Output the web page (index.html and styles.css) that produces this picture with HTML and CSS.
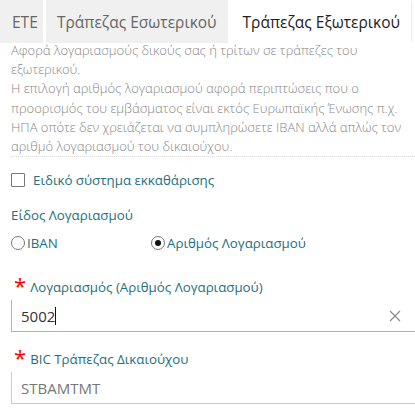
FILE: index.html
```html
<!DOCTYPE html>
<html lang="el">
<head>
    <meta charset="UTF-8">
    <meta name="viewport" content="width=device-width, initial-scale=1.0">
    <title>Εμβάσματα</title>
    <link rel="stylesheet" href="styles.css">
</head>
<body>
    <div class="tabs">
        <div class="tab tab-short">ΕΤΕ</div>
        <div class="tab">Τράπεζας Εσωτερικού</div>
        <div class="tab active">Τράπεζας Εξωτερικού</div>
    </div>

    <div class="panel">
        <p class="hint">
            Αφορά λογαριασμούς δικούς σας ή τρίτων σε τράπεζες του<br>
            εξωτερικού.<br>
            Η επιλογή αριθμός λογαριασμού αφορά περιπτώσεις που ο<br>
            προορισμός του εμβάσματος είναι εκτός Ευρωπαϊκής Ένωσης π.χ.<br>
            ΗΠΑ οπότε δεν χρειάζεται να συμπληρώσετε IBAN αλλά απλώς τον<br>
            αριθμό λογαριασμού του δικαιούχου.
        </p>

        <label class="check-row">
            <span class="checkbox"></span>
            <span class="label-text">Ειδικό σύστημα εκκαθάρισης</span>
        </label>

        <div class="field-title">Είδος Λογαριασμού</div>
        <div class="radio-row">
            <label class="radio radio-iban">
                <span class="radio-dot"></span>
                <span class="label-text">IBAN</span>
            </label>
            <label class="radio">
                <span class="radio-dot checked"></span>
                <span class="label-text">Αριθμός Λογαριασμού</span>
            </label>
        </div>

        <div class="field">
            <div class="field-label"><span class="req">*</span>Λογαριασμός (Αριθμός Λογαριασμού)</div>
            <div class="input focused">
                <span class="value">5002</span><span class="caret"></span>
                <svg class="clear" width="12" height="12" viewBox="0 0 12 12">
                    <path d="M1 1 L11 11 M11 1 L1 11" stroke="#888" stroke-width="1.1" fill="none"/>
                </svg>
            </div>
        </div>

        <div class="field">
            <div class="field-label"><span class="req">*</span>BIC Τράπεζας Δικαιούχου</div>
            <div class="input readonly">
                <span class="value">STBAMTMT</span>
            </div>
        </div>
    </div>
</body>
</html>
```

FILE: styles.css
```css
body {
    margin: 0;
    background-color: #fff;
    font-family: 'Open Sans', 'Noto Sans', sans-serif;
    color: #333;
}

.tabs {
    display: flex;
    height: 43px;
    gap: 3px;
}

.tab {
    display: flex;
    align-items: center;
    padding: 0 11px;
    background-color: #f0f0f0;
    color: #666;
    font-size: 15.5px;
}

.tab-short {
    width: 43px;
    padding: 0 0 0 12px;
    box-sizing: border-box;
}

.tab.active {
    background-color: #fff;
    color: #222;
    padding: 0 11px 0 12px;
    box-shadow: 2px 0 2px -1px #e8e8e8;
}

.panel {
    padding: 0 11px;
}

.hint {
    margin: -2px -11px 0 0;
    padding: 0;
    font-size: 13px;
    font-weight: 300;
    line-height: 19.2px;
    color: #888;
    border-bottom: 1px dotted #ddd;
    white-space: nowrap;
}

.check-row {
    display: flex;
    align-items: center;
    gap: 8px;
    margin-top: 14px;
}

.checkbox {
    width: 14px;
    height: 14px;
    box-sizing: border-box;
    border: 1.5px solid #777;
    border-radius: 1px;
}

.label-text {
    color: #24707e;
    font-size: 13.3px;
}

.field-title {
    margin-top: 17px;
    color: #24707e;
    font-size: 13.3px;
}

.radio-row {
    display: flex;
    margin-top: 10px;
}

.radio {
    display: flex;
    align-items: center;
    gap: 2px;
}

.radio-iban {
    width: 140px;
}

.radio-dot {
    position: relative;
    width: 14px;
    height: 14px;
    box-sizing: border-box;
    border: 1.2px solid #777;
    border-radius: 50%;
}

.radio-dot.checked::after {
    content: '';
    position: absolute;
    top: 3px;
    left: 3px;
    width: 6px;
    height: 6px;
    border-radius: 50%;
    background-color: #111;
}

.field {
    margin-top: 25px;
}

.field + .field {
    margin-top: 17px;
}

.field-label {
    display: flex;
    align-items: flex-end;
    color: #24707e;
    font-size: 13.3px;
    line-height: 20px;
}

.req {
    color: #f00;
    font-size: 22px;
    line-height: 16px;
    margin: 0 4px 0 3px;
    align-self: flex-start;
}

.input {
    display: flex;
    align-items: center;
    height: 31px;
    margin-top: 3px;
    margin-right: -11px;
    padding-left: 9px;
    font-size: 15px;
    border-left: 1px solid #ccc;
    border-bottom: 1px solid #ccc;
}

.input.focused {
    border-color: #6fd0c8;
    color: #333;
}

.input.readonly {
    color: #777;
}

.caret {
    width: 1px;
    height: 18px;
    background-color: #111;
}

.clear {
    margin-left: auto;
    margin-right: 14px;
}
```
